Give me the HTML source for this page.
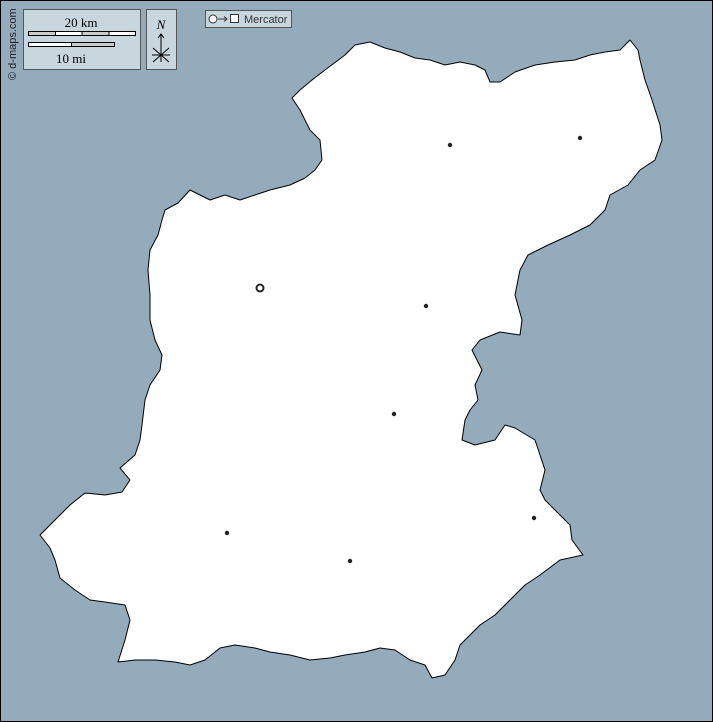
<!DOCTYPE html>
<html><head><style>
html,body{margin:0;padding:0;}
body{width:713px;height:722px;overflow:hidden;background:#000;}
</style></head><body>
<svg width="713" height="722" viewBox="0 0 713 722" xmlns="http://www.w3.org/2000/svg" style="display:block">
<rect x="1" y="1" width="711" height="720" fill="#94abbc"/>
<polygon fill="#fff" stroke="#000" stroke-width="1" stroke-linejoin="round" points="165,210 178,203 190,190 200,195 210,200 225,195 240,200 255,195 270,190 290,185 305,178 315,170 322,160 320,140 310,130 300,110 292,98 300,90 312,80 325,70 345,55 355,45 370,42 385,48 400,52 415,58 430,60 445,65 460,62 475,65 485,70 490,82 500,82 515,72 535,65 555,62 575,60 590,55 605,52 620,50 630,40 638,50 640,60 645,80 652,100 660,125 662,140 655,160 640,170 628,185 610,195 605,210 590,225 570,235 548,245 528,255 520,270 515,295 522,320 520,335 500,332 480,340 472,350 482,370 475,385 478,400 470,410 465,420 462,440 475,445 495,440 505,425 515,428 535,440 540,455 545,470 540,490 545,500 555,510 570,525 572,540 583,555 560,560 540,575 525,585 510,600 495,615 480,625 470,635 460,645 455,660 445,675 432,678 425,665 410,660 395,650 380,648 365,652 345,655 330,658 310,660 290,655 270,652 255,648 235,645 220,648 205,660 190,665 175,662 155,660 135,660 118,662 125,640 130,620 125,605 105,602 90,600 75,590 60,578 55,560 50,548 40,535 55,520 70,505 85,493 105,495 122,492 130,480 120,468 135,455 140,440 142,425 145,400 150,385 160,370 162,355 155,340 150,320 150,295 148,270 150,250 158,235 162,220"/>
<g fill="#222">
<circle cx="450" cy="145" r="2.2"/><circle cx="580" cy="138" r="2.2"/><circle cx="426" cy="306" r="2.2"/><circle cx="394" cy="414" r="2.2"/><circle cx="227" cy="533" r="2.2"/><circle cx="350" cy="561" r="2.2"/><circle cx="534" cy="518" r="2.2"/>
</g>
<circle cx="260" cy="288" r="3.5" fill="none" stroke="#222" stroke-width="2"/>
<rect x="23.5" y="9.5" width="117" height="60" fill="#c8d6de" stroke="#555"/>
<text x="81" y="27" font-family="Liberation Serif" font-size="13" text-anchor="middle">20 km</text>
<rect x="28.5" y="31.5" width="107" height="4" fill="#fff" stroke="#000" stroke-width="1"/>
<rect x="28.5" y="31.5" width="27" height="4" fill="#ccc" stroke="#000"/>
<rect x="82" y="31.5" width="27" height="4" fill="#ccc" stroke="#000"/>
<rect x="28.5" y="42.5" width="86" height="4" fill="#fff" stroke="#000"/>
<rect x="71.5" y="42.5" width="43" height="4" fill="#ccc" stroke="#000"/>
<text x="71" y="63" font-family="Liberation Serif" font-size="13" text-anchor="middle">10 mi</text>
<rect x="146.5" y="9.5" width="30" height="60" fill="#c8d6de" stroke="#555"/>
<text x="161" y="29" font-family="Liberation Serif" font-size="13" font-style="italic" text-anchor="middle">N</text>
<path d="M161,34 L161,62 M158,38 L161,34 L164,38 M153,48 L169,62 M169,48 L153,62 M152,55 L170,55" stroke="#000" fill="none" stroke-width="1"/>
<rect x="205.5" y="10.5" width="86" height="17" fill="#c8d6de" stroke="#555"/>
<circle cx="213" cy="19" r="4" fill="#fff" stroke="#333"/>
<path d="M218,19 L227,19 M224,16.5 L227,19 L224,21.5" stroke="#333" fill="none" stroke-width="1"/>
<rect x="230.5" y="14.5" width="8" height="8" fill="#fff" stroke="#333"/>
<text x="244" y="23" font-family="Liberation Sans" font-size="11" fill="#333">Mercator</text>
<text transform="translate(16,80) rotate(-90)" font-family="Liberation Sans" font-size="11" fill="#222">© d-maps.com</text>
</svg>
</body></html>
